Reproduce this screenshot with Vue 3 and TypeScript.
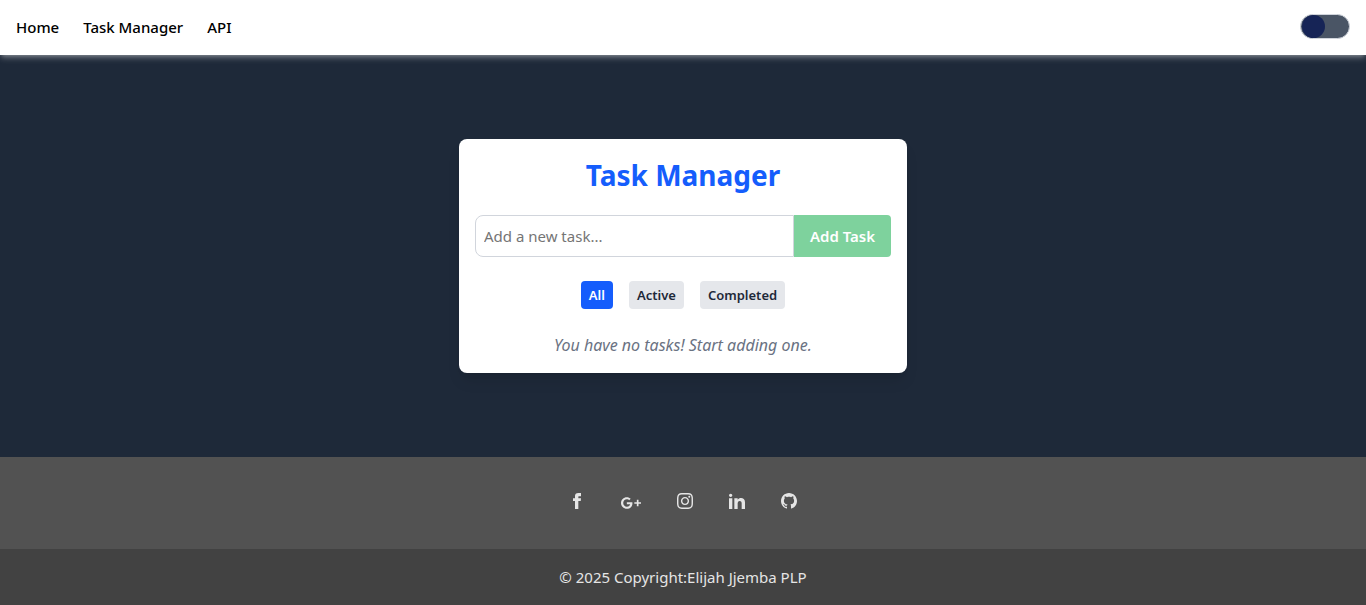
<script setup lang="ts">
import { computed, ref } from 'vue'

type Filter = 'All' | 'Active' | 'Completed'
interface Task {
  id: number
  text: string
  done: boolean
}

const filters: Filter[] = ['All', 'Active', 'Completed']
const links = ['Home', 'Task Manager', 'API']
const socials = [
  {
    name: 'Facebook',
    size: 16,
    path: 'M9 8h-3v4h3v12h5v-12h3.642l.358-4h-4v-1.667c0-.955.192-1.333 1.115-1.333h2.885v-5h-3.808c-3.596 0-5.192 1.583-5.192 4.615v3.385z',
  },
  {
    name: 'Google Plus',
    size: 20,
    path: 'M7 11v2.4h3.97c-.16 1.029-1.2 3.02-3.97 3.02-2.39 0-4.34-1.979-4.34-4.42 0-2.44 1.95-4.42 4.34-4.42 1.36 0 2.27.58 2.79 1.08l1.9-1.83c-1.22-1.14-2.8-1.83-4.69-1.83-3.87 0-7 3.13-7 7s3.13 7 7 7c4.04 0 6.721-2.84 6.721-6.84 0-.46-.051-.81-.111-1.16h-6.61zM24 13h-3v3h-2v-3h-3v-2h3v-3h2v3h3v2z',
  },
  {
    name: 'Instagram',
    size: 16,
    path: 'M12 2.163c3.204 0 3.584.012 4.85.07 3.252.148 4.771 1.691 4.919 4.919.058 1.265.069 1.645.069 4.849 0 3.205-.012 3.584-.069 4.849-.149 3.225-1.664 4.771-4.919 4.919-1.266.058-1.644.07-4.85.07-3.204 0-3.584-.012-4.849-.07-3.26-.149-4.771-1.699-4.919-4.92-.058-1.265-.07-1.644-.07-4.849 0-3.204.013-3.583.07-4.849.149-3.227 1.664-4.771 4.919-4.919 1.266-.057 1.645-.069 4.849-.069zm0-2.163c-3.259 0-3.667.014-4.947.072-4.358.2-6.78 2.618-6.98 6.98-.059 1.281-.073 1.689-.073 4.948 0 3.259.014 3.668.072 4.948.2 4.358 2.618 6.78 6.98 6.98 1.281.058 1.689.072 4.948.072 3.259 0 3.668-.014 4.948-.072 4.354-.2 6.782-2.618 6.979-6.98.059-1.28.073-1.689.073-4.948 0-3.259-.014-3.667-.072-4.947-.196-4.354-2.617-6.78-6.979-6.98-1.281-.059-1.69-.073-4.949-.073zm0 5.838c-3.403 0-6.162 2.759-6.162 6.162s2.759 6.163 6.162 6.163 6.162-2.759 6.162-6.163c0-3.403-2.759-6.162-6.162-6.162zm0 10.162c-2.209 0-4-1.79-4-4 0-2.209 1.791-4 4-4s4 1.791 4 4c0 2.21-1.791 4-4 4zm6.406-11.845c-.796 0-1.441.645-1.441 1.44s.645 1.44 1.441 1.44c.795 0 1.439-.645 1.439-1.44s-.644-1.44-1.439-1.44z',
  },
  {
    name: 'LinkedIn',
    size: 16,
    path: 'M4.98 3.5c0 1.381-1.11 2.5-2.48 2.5s-2.48-1.119-2.48-2.5c0-1.38 1.11-2.5 2.48-2.5s2.48 1.12 2.48 2.5zm.02 4.5h-5v16h5v-16zm7.982 0h-4.968v16h4.969v-8.399c0-4.67 6.029-5.052 6.029 0v8.399h4.988v-10.131c0-7.88-8.922-7.593-11.018-3.714v-2.155z',
  },
  {
    name: 'GitHub',
    size: 16,
    path: 'M12 0c-6.626 0-12 5.373-12 12 0 5.302 3.438 9.8 8.207 11.387.599.111.793-.261.793-.577v-2.234c-3.338.726-4.033-1.416-4.033-1.416-.546-1.387-1.333-1.756-1.333-1.756-1.089-.745.083-.729.083-.729 1.205.084 1.839 1.237 1.839 1.237 1.07 1.834 2.807 1.304 3.492.997.107-.775.418-1.305.762-1.604-2.665-.305-5.467-1.334-5.467-5.931 0-1.311.469-2.381 1.236-3.221-.124-.303-.535-1.524.117-3.176 0 0 1.008-.322 3.301 1.23.957-.266 1.983-.399 3.003-.404 1.02.005 2.047.138 3.006.404 2.291-1.552 3.297-1.23 3.297-1.23.653 1.653.242 2.874.118 3.176.77.84 1.235 1.911 1.235 3.221 0 4.609-2.807 5.624-5.479 5.921.43.372.823 1.102.823 2.222v3.293c0 .319.192.694.801.576 4.765-1.589 8.199-6.086 8.199-11.386 0-6.627-5.373-12-12-12z',
  },
]

const tasks = ref<Task[]>([])
const draft = ref('')
const active = ref<Filter>('All')
const light = ref(false)
const shown = computed(() =>
  tasks.value.filter((t) => active.value === 'All' || t.done === (active.value === 'Completed')),
)

function addTask() {
  const text = draft.value.trim()
  if (!text) return
  tasks.value.push({ id: Date.now(), text, done: false })
  draft.value = ''
}
</script>

<template>
  <div class="page">
    <header class="navbar">
      <nav class="links">
        <a v-for="link in links" :key="link" href="#">{{ link }}</a>
      </nav>
      <input v-model="light" class="switch" type="checkbox" role="switch" aria-label="Toggle theme" />
    </header>

    <main class="main">
      <section class="card">
        <h1>Task Manager</h1>
        <form class="entry" @submit.prevent="addTask">
          <input v-model="draft" type="text" placeholder="Add a new task..." aria-label="New task" />
          <button type="submit" :disabled="!draft.trim()">Add Task</button>
        </form>
        <div class="filters">
          <button
            v-for="f in filters"
            :key="f"
            type="button"
            :class="{ selected: f === active }"
            @click="active = f"
          >{{ f }}</button>
        </div>
        <ul v-if="shown.length" class="tasks">
          <li v-for="t in shown" :key="t.id">
            <label><input v-model="t.done" type="checkbox" /> {{ t.text }}</label>
          </li>
        </ul>
        <p v-else class="empty">You have no tasks! Start adding one.</p>
      </section>
    </main>

    <footer class="footer">
      <div class="socials">
        <a v-for="s in socials" :key="s.name" href="#" :aria-label="s.name">
          <svg :width="s.size" :height="s.size" viewBox="0 0 24 24" fill="currentColor" fill-rule="evenodd" aria-hidden="true">
            <path :d="s.path" />
          </svg>
        </a>
      </div>
      <div class="copyright">© 2025 Copyright:<a href="#">Elijah Jjemba PLP</a></div>
    </footer>
  </div>
</template>

<style>
body {
  margin: 0;
}
</style>

<style scoped>
.page {
  display: flex;
  flex-direction: column;
  min-height: 100vh;
  background: #1e2939;
  font: 15px/24px "Segoe UI", "Noto Sans", "Open Sans", sans-serif;
}
.page *,
.page {
  box-sizing: border-box;
}
a {
  color: inherit;
  text-decoration: none;
}
button,
input {
  font: inherit;
}
button {
  border: 0;
  cursor: pointer;
}
.navbar {
  display: flex;
  align-items: center;
  justify-content: space-between;
  height: 55px;
  padding: 0 16px 2px;
  background: #fff;
  color: #000;
  box-shadow: 0 4px 6px -1px rgba(255, 255, 255, 0.3), 0 2px 4px -2px rgba(255, 255, 255, 0.3);
}
.links {
  display: flex;
  gap: 24px;
  font-weight: 500;
}
.switch {
  appearance: none;
  display: flex;
  align-items: center;
  width: 50px;
  height: 25px;
  margin: 0;
  padding: 0 1px;
  border: 1px solid #d1d5dc;
  border-radius: 13px;
  background: #4a5565;
  cursor: pointer;
}
.switch::before {
  content: "";
  width: 23px;
  height: 23px;
  border-radius: 50%;
  background: #162456;
}
.switch:checked {
  justify-content: flex-end;
}
.main {
  flex: 1;
  display: flex;
  align-items: center;
  justify-content: center;
  padding: 16px;
}
.card {
  width: 100%;
  max-width: 448px;
  padding: 16px;
  border-radius: 8px;
  background: #fff;
  box-shadow: 0 10px 15px -3px rgba(0, 0, 0, 0.1), 0 4px 6px -4px rgba(0, 0, 0, 0.1);
}
h1 {
  margin: 0 0 20px;
  color: #155dfc;
  font-size: 28px;
  line-height: 40px;
  font-weight: 700;
  text-align: center;
}
.entry {
  display: flex;
  margin-bottom: 24px;
}
.entry input {
  flex: 1;
  min-width: 0;
  height: 42px;
  padding: 8px;
  border: 1px solid #d1d5dc;
  border-radius: 8px 0 0 8px;
  background: #fff;
  color: #1e2939;
}
.entry input::placeholder {
  color: #757575;
}
.entry button {
  padding: 8px 16px;
  border-radius: 0 4px 4px 0;
  background: #00a63e;
  color: #fff;
  font-weight: 600;
}
.entry button:disabled {
  opacity: 0.5;
}
.filters {
  display: flex;
  justify-content: center;
  gap: 16px;
  margin-bottom: 24px;
}
.filters button {
  padding: 4px 8px;
  border-radius: 4px;
  background: #e5e7eb;
  color: #1e2939;
  font-size: 13px;
  line-height: 20px;
  font-weight: 600;
}
.filters .selected {
  background: #155dfc;
  color: #fff;
}
.tasks {
  margin: 0;
  padding: 0;
  list-style: none;
}
.empty {
  margin: 0;
  color: #6a7282;
  font-size: 16px;
  font-style: italic;
  text-align: center;
}
.footer {
  background: #525252;
  color: #e5e5e5;
}
.socials {
  display: flex;
  justify-content: center;
  align-items: flex-start;
  gap: 36px;
  padding: 36px 16px;
}
.socials a,
.socials svg {
  display: block;
}
.copyright {
  padding: 16px;
  background: #424242;
  text-align: center;
}
</style>
